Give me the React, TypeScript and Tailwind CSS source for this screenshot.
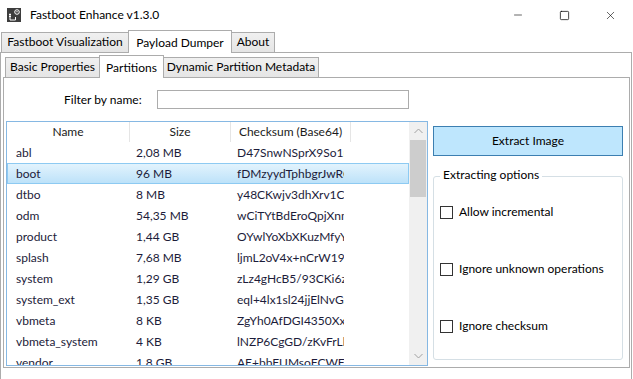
import { Minus, Square, X } from "lucide-react";

type Part = { name: string; size: string; sum: string };

const parts: Part[] = [
  { name: "abl", size: "2,08 MB", sum: "D47SnwNSprX9So1nQ8" },
  { name: "boot", size: "96 MB", sum: "fDMzyydTphbgrJwRCu" },
  { name: "dtbo", size: "8 MB", sum: "y48CKwjv3dhXrv1CtlP" },
  { name: "odm", size: "54,35 MB", sum: "wCiTYtBdEroQpjXnmA" },
  { name: "product", size: "1,44 GB", sum: "OYwlYoXbXKuzMfyYk2" },
  { name: "splash", size: "7,68 MB", sum: "ljmL2oV4x+nCrW19eF" },
  { name: "system", size: "1,29 GB", sum: "zLz4gHcB5/93CKi6z0Q" },
  { name: "system_ext", size: "1,35 GB", sum: "eql+4lx1sl24jjElNvGx" },
  { name: "vbmeta", size: "8 KB", sum: "ZgYh0AfDGI4350XxSd" },
  { name: "vbmeta_system", size: "4 KB", sum: "lNZP6CgGD/zKvFrLkw" },
  { name: "vendor", size: "1,8 GB", sum: "AE+bbFUMsoFCWFrT" },
];

const SELECTED = 1;

function AppIcon() {
  return (
    <svg width="14" height="14" viewBox="0 0 14 14">
      <rect width="14" height="14" fill="#3d3d3d" />
      <path d="M3 5.5v6.5h5.5V9" fill="none" stroke="#fff" strokeWidth="1" />
      <path d="M2 6.5h2M2 8.5h2" stroke="#fff" strokeWidth="1" />
      <circle cx="10" cy="4" r="2.3" fill="none" stroke="#fff" strokeWidth="1" />
      <path d="M10 3v1.3" stroke="#fff" strokeWidth="1" />
    </svg>
  );
}

function Tab({
  label,
  width,
  active,
}: {
  label: string;
  width: number;
  active?: boolean;
}) {
  return active ? (
    <div
      className="relative z-10 -mb-px -ml-px flex h-[23px] items-start justify-center whitespace-nowrap border border-b-0 border-[#acacac] bg-white pt-[3px]"
      style={{ width }}
    >
      {label}
    </div>
  ) : (
    <div
      className="-ml-px flex h-[20px] items-center justify-center whitespace-nowrap border border-b-0 border-[#acacac] bg-gradient-to-b from-[#f0f0f0] to-[#e5e5e5] pb-px"
      style={{ width }}
    >
      {label}
    </div>
  );
}

function Check({ label }: { label: string }) {
  return (
    <div className="flex h-[14px] items-center whitespace-nowrap">
      <div className="h-[13px] w-[13px] border border-[#333] bg-white" />
      <span className="ml-[6px] leading-none">{label}</span>
    </div>
  );
}

export default function App() {
  return (
    <div
      className="relative h-[379px] w-[633px] overflow-hidden bg-white text-[12px] text-black"
      style={{ fontFamily: 'Lato, "Noto Sans", sans-serif' }}
    >
      {/* title bar */}
      <div className="flex h-[30px] items-center">
        <div className="ml-[7px]">
          <AppIcon />
        </div>
        <span className="ml-[9px]">Fastboot Enhance v1.3.0</span>
        <div className="ml-auto flex h-full">
          <div className="flex w-[46px] items-center justify-center">
            <Minus className="h-[12px] w-[12px]" strokeWidth={1.2} />
          </div>
          <div className="flex w-[46px] items-center justify-center">
            <Square className="h-[11px] w-[11px]" strokeWidth={1.6} absoluteStrokeWidth />
          </div>
          <div className="flex w-[46px] items-center justify-center">
            <X className="h-[13px] w-[13px]" strokeWidth={1.1} />
          </div>
        </div>
      </div>

      {/* outer tabs */}
      <div className="flex h-[22px] items-end pl-[2px]">
        <Tab label="Fastboot Visualization" width={128} />
        <Tab label="Payload Dumper" width={104} active />
        <Tab label="About" width={44} />
      </div>

      {/* outer pane */}
      <div className="flex h-[330px] w-[632px] flex-col border border-b-0 border-[#acacac] pl-[2px] pr-px">
        {/* inner tabs */}
        <div className="mt-[2px] flex h-[22px] items-end pl-[3px]">
          <Tab label="Basic Properties" width={95} />
          <Tab label="Partitions" width={65} active />
          <Tab label="Dynamic Partition Metadata" width={156} />
        </div>

        {/* inner pane */}
        <div className="flex h-[291px] flex-col border border-[#acacac]">
          <div className="mt-[12px] flex h-[19px] items-center whitespace-nowrap">
            <span className="ml-[60px] w-[86px]">Filter by name:</span>
            <div className="ml-[7px] h-[19px] w-[252px] border border-[#acacac] bg-white" />
          </div>

          <div className="mt-[12px] flex pl-[2px]">
            {/* list */}
            <div className="flex h-[245px] w-[422px] border border-[#86b8e3] bg-white">
              <div className="flex h-full w-[402px] flex-col overflow-hidden whitespace-nowrap">
                <div className="flex h-[20px] shrink-0 items-center text-[#1b1b1b]">
                  <div className="flex h-full w-[123px] items-center justify-center border-r border-[#e5e5e5]">
                    Name
                  </div>
                  <div className="flex h-full w-[101px] items-center justify-center border-r border-[#e5e5e5]">
                    Size
                  </div>
                  <div className="flex h-full w-[120px] items-center justify-center border-r border-[#e5e5e5]">
                    Checksum (Base64)
                  </div>
                </div>
                {parts.map((p, i) => (
                  <div
                    key={p.name}
                    className={
                      i === SELECTED
                        ? "flex h-[21px] shrink-0 items-center border border-[#8dcaf2] bg-gradient-to-b from-[#e2f3fd] to-[#bde2f9] text-[#1c1c3a]"
                        : "flex h-[21px] shrink-0 items-center border border-transparent text-[#1c1c3a]"
                    }
                  >
                    <div className="w-[123px] pl-[8px]">{p.name}</div>
                    <div className="w-[101px] pl-[5px]">{p.size}</div>
                    <div className="w-[112px] overflow-hidden pl-[5px]">{p.sum}</div>
                  </div>
                ))}
              </div>
              {/* scrollbar */}
              <div className="flex h-full w-[18px] flex-col bg-[#f0f0f0]">
                <div className="flex h-[18px] items-center justify-center">
                  <svg width="9" height="6" viewBox="0 0 9 6">
                    <path d="M0.5 5L4.5 1L8.5 5" fill="none" stroke="#a0a0a0" />
                  </svg>
                </div>
                <div className="mx-px h-[57px] bg-[#cdcdcd]" />
                <div className="flex-1" />
                <div className="flex h-[18px] items-center justify-center">
                  <svg width="9" height="6" viewBox="0 0 9 6">
                    <path d="M0.5 1L4.5 5L8.5 1" fill="none" stroke="#a0a0a0" />
                  </svg>
                </div>
              </div>
            </div>

            {/* right panel */}
            <div className="ml-[5px] flex w-[190px] flex-col">
              <div className="mt-[5px] flex h-[30px] items-center justify-center border border-[#3c7fb1] bg-[#bee6fd]">
                Extract Image
              </div>
              <div className="relative mt-[20px] h-[184px] rounded-[3px] border border-[#d5dfe5] px-[6px] pt-[28px]">
                <span className="absolute -top-[10px] left-[6px] whitespace-nowrap bg-white px-[3px] leading-[16px]">
                  Extracting options
                </span>
                <div className="flex flex-col gap-[43px]">
                  <Check label="Allow incremental" />
                  <Check label="Ignore unknown operations" />
                  <Check label="Ignore checksum" />
                </div>
              </div>
            </div>
          </div>
        </div>
      </div>
    </div>
  );
}
